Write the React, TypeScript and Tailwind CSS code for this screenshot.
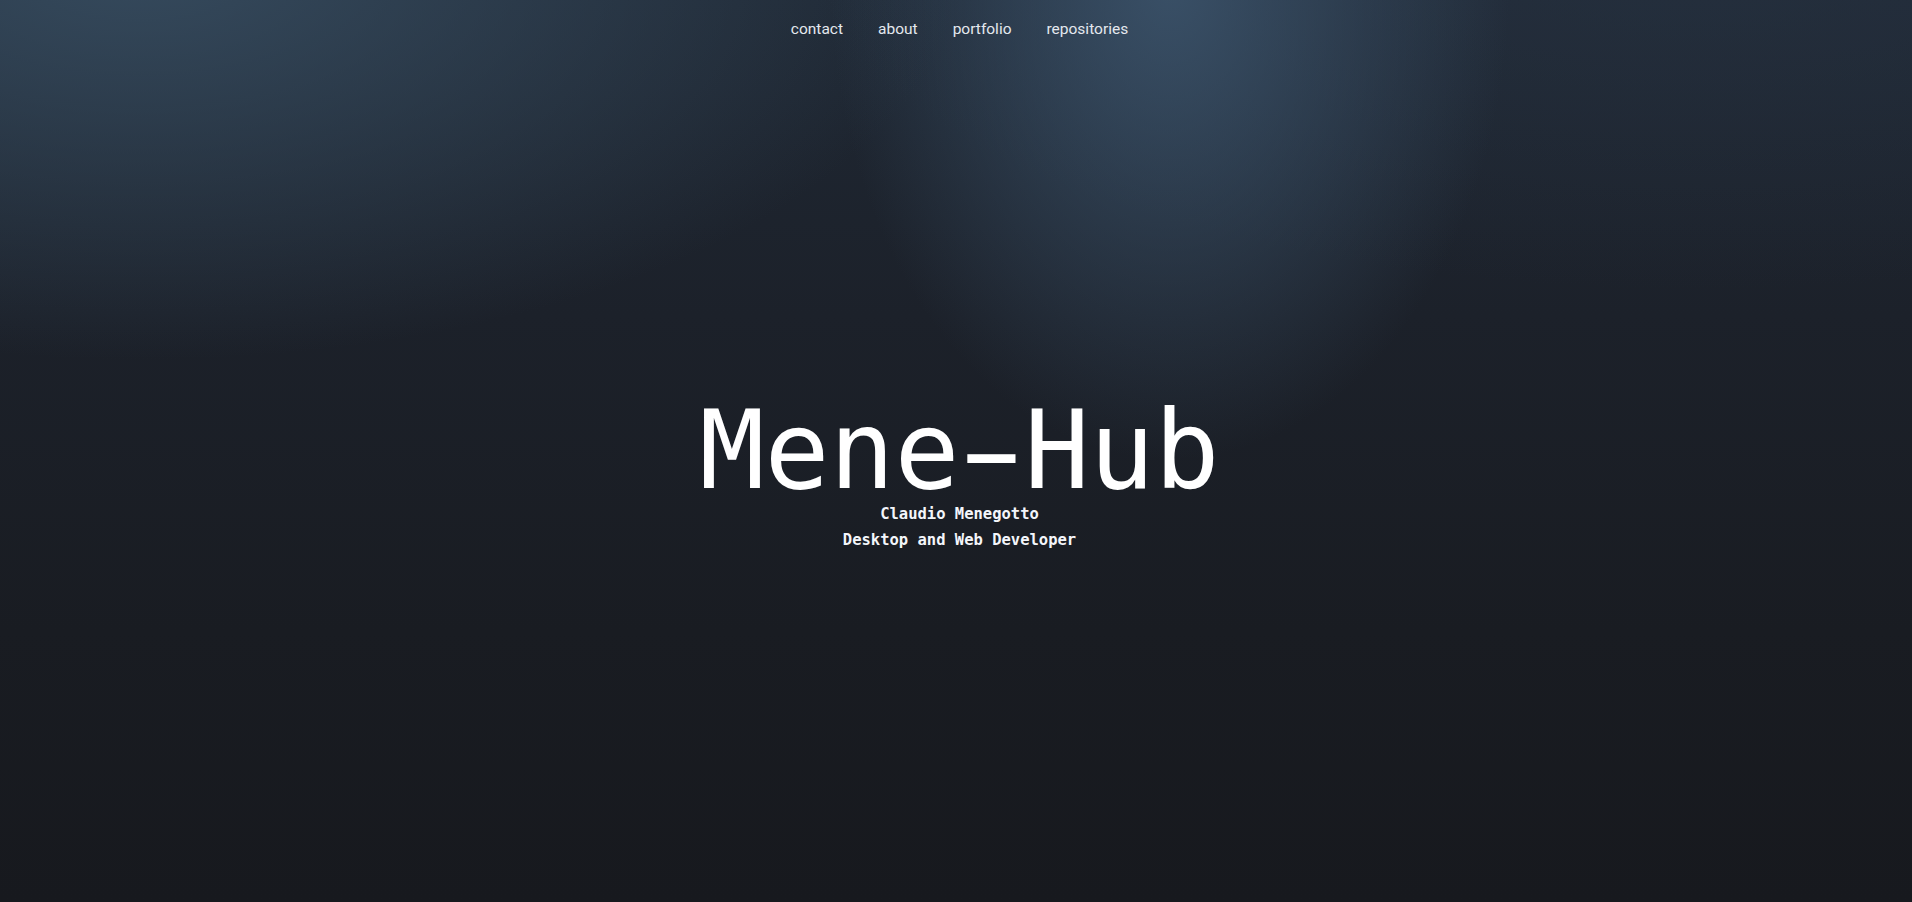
import React from "react";

export default function App() {
  const links = ["contact", "about", "portfolio", "repositories"];
  return (
    <div className="relative h-[902px] w-full overflow-hidden bg-[radial-gradient(ellipse_340px_480px_at_1170px_-20px,rgba(60,84,108,0.9),rgba(60,84,108,0)_100%),radial-gradient(ellipse_820px_400px_at_140px_-40px,rgba(56,78,98,0.9),rgba(56,78,98,0)_100%),radial-gradient(ellipse_900px_350px_at_1700px_-60px,rgba(40,52,68,0.6),rgba(40,52,68,0)_100%),linear-gradient(180deg,#1f2834_0%,#1c212a_35%,#191c22_70%,#17191e_100%)]">
      <nav className="flex h-[58px] items-center justify-center gap-[35px] pl-[7px] font-['Roboto',_'Liberation_Sans',_sans-serif] text-[15.5px] leading-[24px] text-[#e4e8ee]">
        {links.map((l) => (
          <a key={l} href="#" className="no-underline">
            {l}
          </a>
        ))}
      </nav>
      <main className="flex flex-col items-center pt-[347px] pl-[7px] font-['DejaVu_Sans_Mono',_'Liberation_Mono',_monospace] text-white">
        <h1 className="text-[108px] font-normal leading-[92px]">
          Mene<span className="inline-block scale-x-[1.75]">-</span>Hub
        </h1>
        <div className="mt-[4px] flex flex-col items-center text-[15.5px] font-bold leading-[26px] text-[#f4f6fb]">
          <span>Claudio Menegotto</span>
          <span>Desktop and Web Developer</span>
        </div>
      </main>
    </div>
  );
}
